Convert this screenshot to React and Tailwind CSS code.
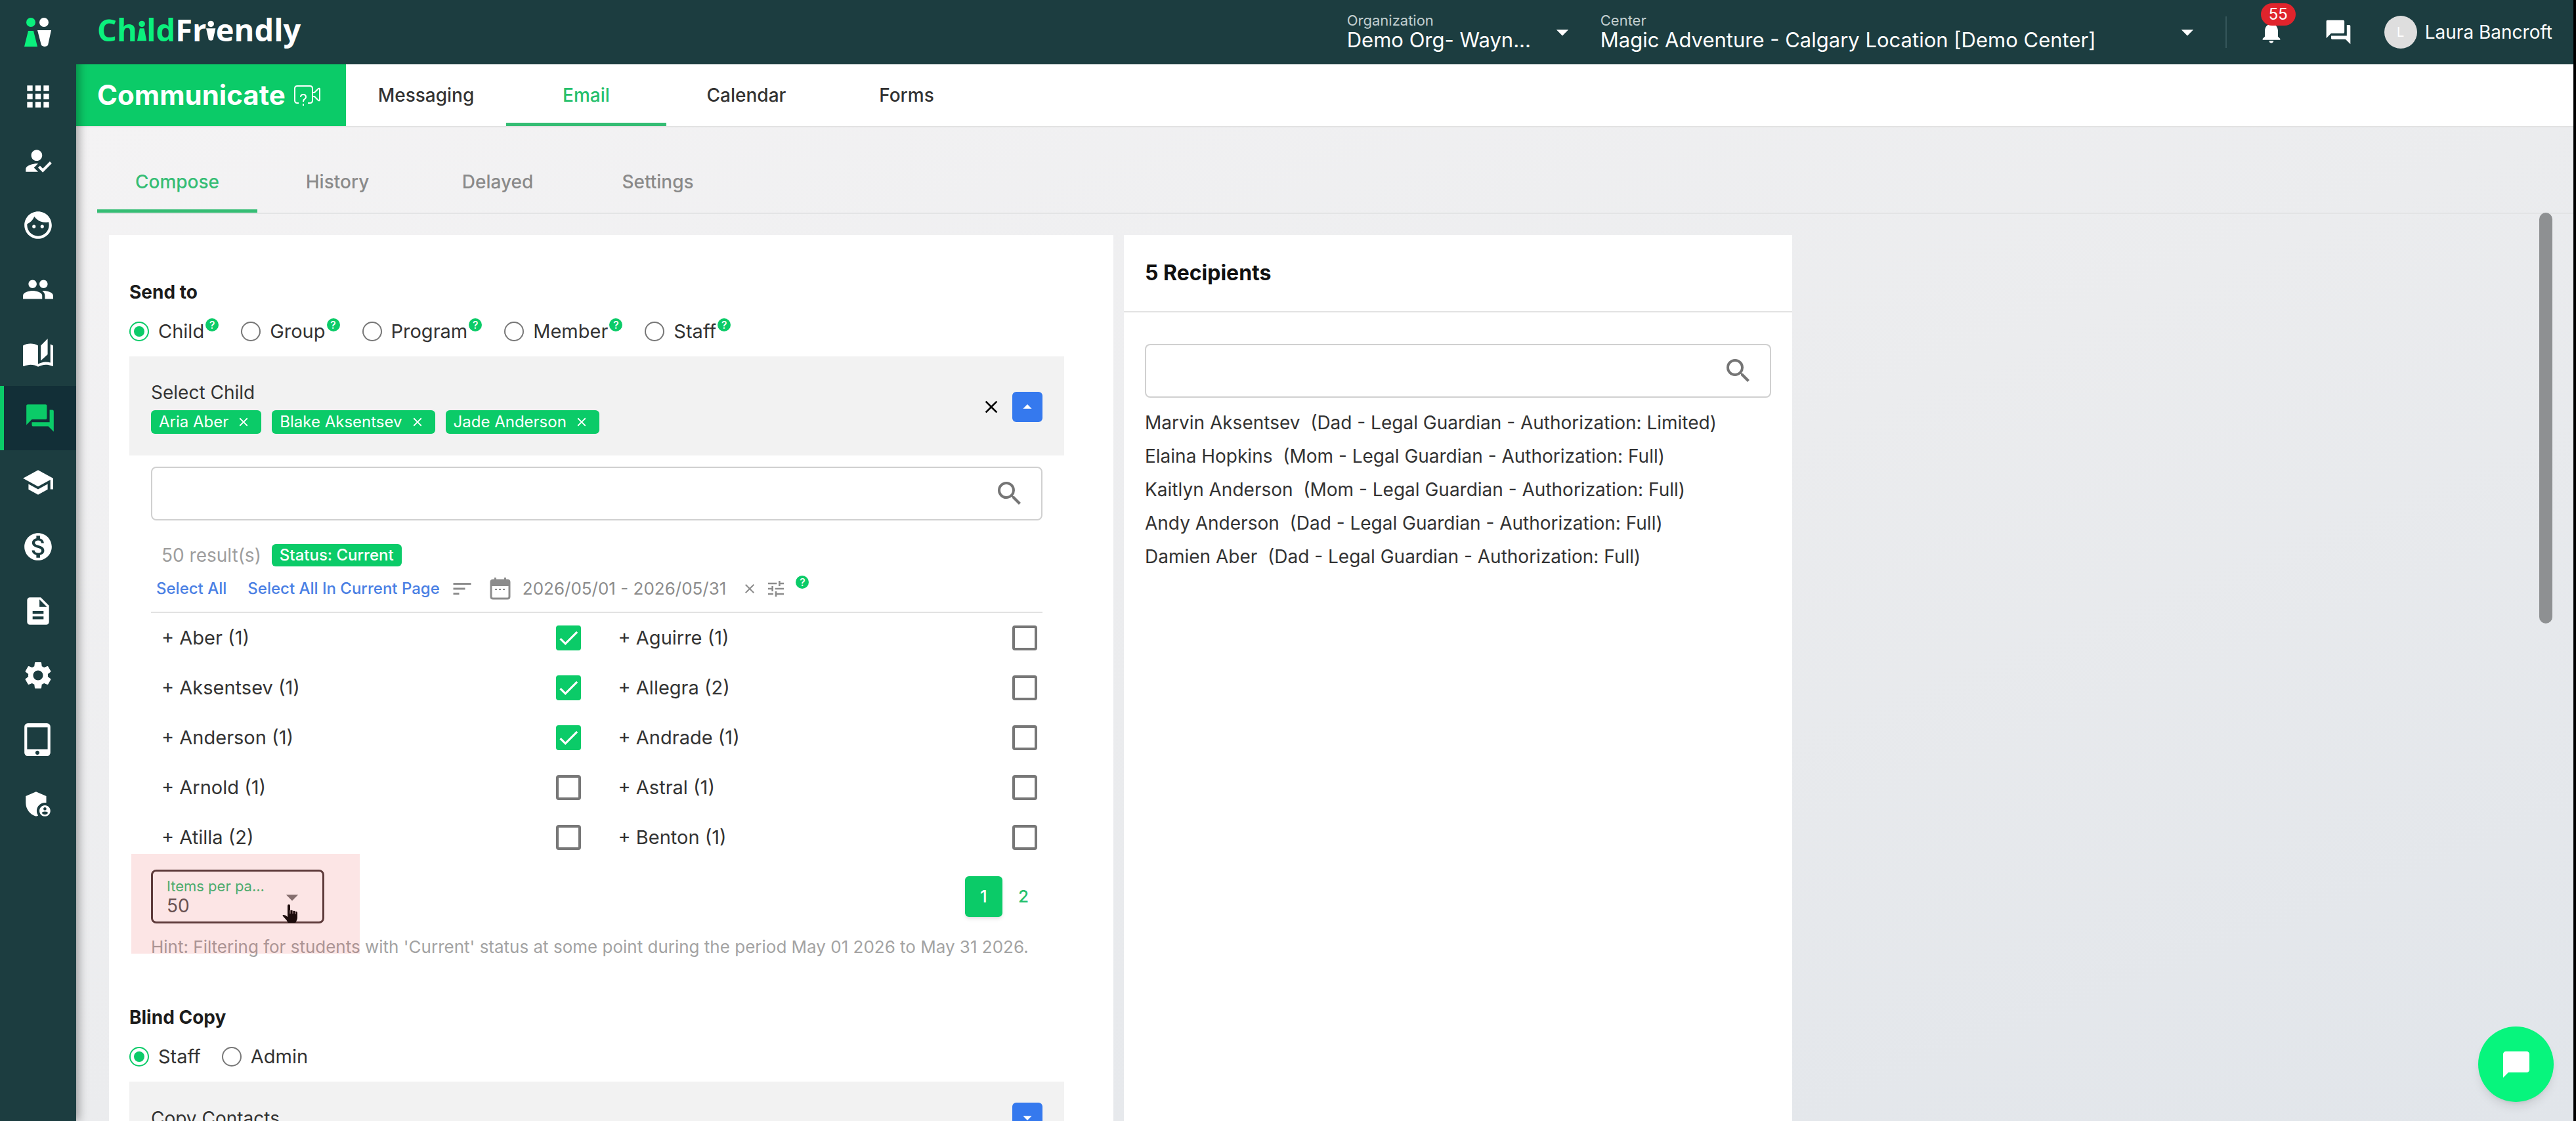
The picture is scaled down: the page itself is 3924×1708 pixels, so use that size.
import React, { useState } from 'react';
import {
  MdApps,
  MdHowToReg,
  MdFace,
  MdPeople,
  MdAutoStories,
  MdForum,
  MdSchool,
  MdMonetizationOn,
  MdDescription,
  MdSettings,
  MdTabletMac,
  MdAdminPanelSettings,
  MdNotifications,
  MdArrowDropDown,
  MdArrowDropUp,
  MdSearch,
  MdClose,
  MdCheck,
  MdSort,
  MdTune,
  MdChatBubble,
} from 'react-icons/md';

const navItems = [
  { name: 'Dashboard', icon: MdApps },
  { name: 'Attendance', icon: MdHowToReg },
  { name: 'Children', icon: MdFace },
  { name: 'Members', icon: MdPeople },
  { name: 'Learning', icon: MdAutoStories },
  { name: 'Communicate', icon: MdForum },
  { name: 'Programs', icon: MdSchool },
  { name: 'Billing', icon: MdMonetizationOn },
  { name: 'Reports', icon: MdDescription },
  { name: 'Settings', icon: MdSettings },
  { name: 'Devices', icon: MdTabletMac },
  { name: 'Admin', icon: MdAdminPanelSettings },
];

const families = [
  'Aber (1)', 'Aguirre (1)',
  'Aksentsev (1)', 'Allegra (2)',
  'Anderson (1)', 'Andrade (1)',
  'Arnold (1)', 'Astral (1)',
  'Atilla (2)', 'Benton (1)',
];

const recipients = [
  ['Marvin Aksentsev', '(Dad - Legal Guardian - Authorization: Limited)'],
  ['Elaina Hopkins', '(Mom - Legal Guardian - Authorization: Full)'],
  ['Kaitlyn Anderson', '(Mom - Legal Guardian - Authorization: Full)'],
  ['Andy Anderson', '(Dad - Legal Guardian - Authorization: Full)'],
  ['Damien Aber', '(Dad - Legal Guardian - Authorization: Full)'],
];

const LogoMark = () => (
  <svg width="42" height="46" viewBox="0 0 42 46" aria-hidden="true">
    <circle cx="10" cy="8" r="7" fill="#0bf07d" />
    <path d="M6 21h8l6 24H0z" fill="#0bf07d" />
    <circle cx="30" cy="8" r="7" fill="#fff" />
    <path d="M20 20h21l-5 23q-5 4-10 0z" fill="#fff" />
  </svg>
);

// the two "i" letters of the word mark are little figures
const FigureI = ({ body }) => (
  <span className="relative inline-block">
    <span className="text-transparent">i</span>
    <svg className="absolute inset-x-0 bottom-3 h-8 w-full" viewBox="0 0 15 32" aria-hidden="true">
      <circle cx="7.5" cy="5" r="5" fill="currentColor" />
      <path d={body} fill="currentColor" />
    </svg>
  </span>
);

const VideoHelpIcon = () => (
  <svg width="42" height="34" viewBox="0 0 42 34" fill="none" stroke="#fff" strokeWidth="2" aria-hidden="true">
    <path d="M8 29H6q-4 0-4-4V7q0-4 4-4h19q4 0 4 4v18q0 4-4 4h-3" />
    <path d="M29 13l3 0 6-6q2-1 2 1v16q0 2-2 1l-6-6h-3" />
    <path d="M11 20q0-4 4-4t4 4q0 2-2 3t-2 4M15 30v3" />
  </svg>
);

const CalendarIcon = () => (
  <svg width="32" height="34" viewBox="0 0 32 34" aria-hidden="true">
    <path d="M5 4h22q3 0 3 3v22q0 3-3 3H5q-3 0-3-3V7q0-3 3-3z" fill="none" stroke="#8c8c8c" strokeWidth="3" />
    <path d="M2 5h28v8H2zM7 0h3v6H7zM22 0h3v6h-3z" fill="#8c8c8c" />
    <path d="M8 18h3M14 18h3M20 18h3" stroke="#8c8c8c" strokeWidth="2" />
  </svg>
);

// pointing hand drawn over the select
const HandCursor = () => (
  <svg className="pointer-events-none absolute top-[50px] left-[197px]" width="24" height="29" viewBox="0 0 24 29" aria-hidden="true">
    <path
      d="M8 2q0-2 2-2t2 2v7q3-1 4 1 3-1 4 1 3-1 3 2v7q0 3-3 8H9Q7 24 2 19q-3-3 0-3 3 0 6 3z"
      fill="#1c0c0c"
    />
    <path d="M12 9v5M16 10v4M20 11v4" stroke="#c9a9a9" strokeWidth="1" />
  </svg>
);

const HelpBadge = () => (
  <span className="ml-0.5 flex size-5 items-center justify-center self-start rounded-full bg-[#0bcb68] text-base leading-5 font-medium text-white">
    ?
  </span>
);

const Radio = ({ name, label, help, defaultChecked }) => (
  <div className="flex h-10 items-center">
    <label className="flex items-center gap-[14px] text-[29px]">
      <input
        type="radio"
        name={name}
        defaultChecked={defaultChecked}
        className="size-[30px] appearance-none rounded-full border-2 border-[#777] bg-white bg-clip-content p-[5px] checked:border-[#0bcb68] checked:bg-[#0bcb68]"
      />
      {label}
    </label>
    {help && <HelpBadge />}
  </div>
);

const SearchBox = ({ label }) => (
  <div className="flex h-[82px] items-center rounded-lg border-2 border-[#d0d0d0] bg-white pr-6">
    <input type="text" aria-label={label} className="h-full min-w-0 flex-1 px-6 outline-none" />
    <MdSearch className="size-12 text-[#757575]" />
  </div>
);

const Chip = ({ name }) => (
  <span className="flex h-9 items-center gap-3 rounded-md bg-[#0bcb68] pr-4 pl-3 text-2xl text-white">
    {name}
    <button type="button" aria-label={`Remove ${name}`}>
      <MdClose className="size-[22px]" />
    </button>
  </span>
);

const HeaderSelect = ({ id, label, value, className }) => (
  <div className={`relative flex flex-col ${className}`}>
    <label htmlFor={id} className="text-[22px] leading-6 text-[#c3cfd0]">{label}</label>
    <select id={id} className="appearance-none bg-transparent text-[31px] leading-9 text-white outline-none">
      <option>{value}</option>
    </select>
    <MdArrowDropDown className="pointer-events-none absolute top-2 right-0 size-11 text-white" />
  </div>
);

const App = () => {
  const [checked, setChecked] = useState(['Aber (1)', 'Aksentsev (1)', 'Anderson (1)']);

  const toggle = (family) => {
    setChecked((prev) => (prev.includes(family) ? prev.filter((f) => f !== family) : [...prev, family]));
  };

  return (
    <div className="flex h-screen overflow-hidden border-r-4 border-black bg-[#1c3d40] font-['Inter',sans-serif] text-[28px] leading-10 text-[#333]">
      {/* Sidebar */}
      <aside className="z-10 w-[116px] shrink-0 bg-[#1c3d40] shadow-[4px_0_14px_rgba(0,0,0,0.35)]">
        <a href="#home" aria-label="Home" className="flex h-[98px] items-center justify-center">
          <LogoMark />
        </a>
        <nav>
          {navItems.map(({ name, icon: Icon }) => (
            <a
              key={name}
              href={`#${name.toLowerCase()}`}
              aria-label={name}
              className={
                name === 'Communicate'
                  ? 'flex h-[98px] items-center justify-center border-l-[6px] border-[#0bcb68] bg-[#122f37] text-[#0bcb68]'
                  : 'flex h-[98px] items-center justify-center text-white'
              }
            >
              <Icon className="size-[50px]" />
            </a>
          ))}
        </nav>
      </aside>

      <div className="flex min-w-0 flex-1 flex-col">
        {/* Top bar */}
        <header className="z-10 flex h-[98px] shrink-0 items-center justify-between bg-[#1c3d40] pr-8 pl-8">
          <div className="pb-2 font-['Open_Sans',sans-serif] text-[47px] leading-[60px] font-bold text-white">
            <span className="text-[#0bf07d]">
              Ch<FigureI body="M4 12h7l4 20H0z" />ld
            </span>
            Fr<FigureI body="M0 12h15l-4 18q-3 3-7 0z" />endly
          </div>
          <div className="flex items-center">
            <HeaderSelect id="organization" label="Organization" value="Demo Org- Wayn..." className="w-[350px]" />
            <HeaderSelect id="center" label="Center" value="Magic Adventure - Calgary Location [Demo Center]" className="ml-9 w-[916px]" />
            <div className="ml-9 h-12 w-[2px] bg-[#35565a]" />
            <button type="button" aria-label="Notifications" className="relative ml-12 text-white">
              <MdNotifications className="size-10" />
              <span className="absolute -top-6 left-1 rounded-full bg-[#e0242c] px-3 text-2xl leading-[34px]">55</span>
            </button>
            <button type="button" aria-label="Messages" className="ml-[60px] text-white">
              <MdForum className="size-11" />
            </button>
            <span className="ml-12 flex size-[50px] items-center justify-center rounded-full bg-[#dedede] text-xl text-white">L</span>
            <span className="ml-3 text-[28px] text-white">Laura Bancroft</span>
          </div>
        </header>

        {/* Section tabs */}
        <div className="flex h-24 shrink-0 border-b-2 border-[#e2e2e2] bg-white font-medium">
          <h1 className="flex w-[411px] items-center gap-3 bg-[#0bcb68] pl-8 text-[42px] font-bold text-white">
            Communicate
            <VideoHelpIcon />
          </h1>
          {['Messaging', 'Email', 'Calendar', 'Forms'].map((tab) => (
            <a
              key={tab}
              href={`#${tab.toLowerCase()}`}
              className={
                tab === 'Email'
                  ? 'flex w-[244px] items-center justify-center border-y-[5px] border-t-transparent border-b-[#35bd74] text-[#24c06c]'
                  : 'flex w-[244px] items-center justify-center'
              }
            >
              {tab}
            </a>
          ))}
        </div>

        <main className="relative flex min-h-0 flex-1 flex-col bg-linear-to-br from-[#f4f3f4] via-[#ebecee] via-50% to-[#e1e5ea] pl-8">
          <div className="flex h-[132px] shrink-0 border-b-2 border-[#e3e4e5] font-medium text-[#8a8a8a]">
            {['Compose', 'History', 'Delayed', 'Settings'].map((tab) => (
              <a
                key={tab}
                href={`#${tab.toLowerCase()}`}
                className={
                  tab === 'Compose'
                    ? 'flex w-[244px] items-center justify-center border-b-[5px] border-[#35bd74] pt-10 text-[#35bd74]'
                    : 'flex w-[244px] items-center justify-center pt-9'
                }
              >
                {tab}
              </a>
            ))}
          </div>

          <div className="flex flex-1 gap-4 pt-8 pl-[18px]">
            <form className="w-[1530px] shrink-0 bg-white pt-[67px] pr-[75px] pl-[31px]">
              <h2 className="font-bold text-[#1c1c1c]">Send to</h2>
              <div className="mt-5 flex gap-[34px]">
                <Radio name="sendTo" label="Child" help defaultChecked />
                <Radio name="sendTo" label="Group" help />
                <Radio name="sendTo" label="Program" help />
                <Radio name="sendTo" label="Member" help />
                <Radio name="sendTo" label="Staff" help />
              </div>

              <div className="mt-[18px] flex items-center justify-between bg-[#f2f2f2] px-[33px] pt-[35px] pb-[33px]">
                <div>
                  <div>Select Child</div>
                  <div className="mt-[7px] flex gap-4">
                    <Chip name="Aria Aber" />
                    <Chip name="Blake Aksentsev" />
                    <Chip name="Jade Anderson" />
                  </div>
                </div>
                <div className="flex items-center gap-4">
                  <button type="button" aria-label="Clear selection">
                    <MdClose className="size-8 text-black" />
                  </button>
                  <button type="button" aria-label="Collapse" className="flex size-[46px] items-center justify-center rounded-md bg-[#3579ee] text-white">
                    <MdArrowDropUp className="size-8" />
                  </button>
                </div>
              </div>

              <div className="mt-[17px] px-[33px]">
                <SearchBox label="Search children" />

                <div className="mt-[33px] flex items-center gap-4 pl-4 text-[#9e9e9e]">
                  50 result(s)
                  <span className="rounded-md bg-[#0bcb68] px-3 text-2xl leading-[34px] font-medium text-white">Status: Current</span>
                </div>

                <div className="mt-[11px] flex items-center border-b-2 border-[#e2e2e2] pb-[15px] pl-2 text-[#8c8c8c]">
                  <button type="button" className="text-2xl font-medium text-[#4a80e4]">Select All</button>
                  <button type="button" className="ml-8 text-2xl font-medium text-[#4a80e4]">Select All In Current Page</button>
                  <button type="button" aria-label="Sort" className="ml-4">
                    <MdSort className="size-9" />
                  </button>
                  <span className="ml-6 flex items-center gap-[18px] text-[26px]">
                    <CalendarIcon />
                    2026/05/01 - 2026/05/31
                  </span>
                  <button type="button" aria-label="Clear dates" className="ml-6">
                    <MdClose className="size-6" />
                  </button>
                  <button type="button" aria-label="Filters" className="mx-3">
                    <MdTune className="size-8" />
                  </button>
                  <HelpBadge />
                </div>
              </div>

              <div className="grid grid-cols-2 pl-[33px] text-[29px]">
                {families.map((family) => (
                  <div key={family} className="flex h-[76px] items-center justify-between pr-[41px] pl-4">
                    <label htmlFor={family}>+ {family}</label>
                    <span className="relative flex">
                      <input
                        id={family}
                        type="checkbox"
                        checked={checked.includes(family)}
                        onChange={() => toggle(family)}
                        className="size-[38px] appearance-none rounded-sm border-4 border-[#777] checked:border-[#0bcb68] checked:bg-[#0bcb68]"
                      />
                      {checked.includes(family) && (
                        <MdCheck className="pointer-events-none absolute inset-0 size-[38px] text-white" />
                      )}
                    </span>
                  </div>
                ))}
              </div>

              <div className="mt-[11px] flex items-center justify-between pr-[30px] pl-[33px]">
                <div className="relative h-[82px] w-[264px] rounded-lg border-[3px] border-[#4a3c3c] pt-2 pl-[21px]">
                  <label htmlFor="perPage" className="block text-[22px] leading-7 text-[#35bd74]">Items per pa...</label>
                  <select id="perPage" className="block w-full appearance-none text-[28px] leading-8 text-[#555] outline-none">
                    <option>50</option>
                  </select>
                  <MdArrowDropDown className="pointer-events-none absolute top-[17px] right-6 size-11 text-[#777]" />
                  <div className="pointer-events-none absolute -top-[27px] -left-[33px] h-[152px] w-[348px] bg-[#e53935]/13" />
                  <HandCursor />
                </div>
                <div className="flex items-center text-[26px] font-medium">
                  <button type="button" className="h-[62px] w-[57px] rounded-md bg-[#0bcb68] text-white shadow-md">1</button>
                  <button type="button" className="h-[62px] w-16 text-[#24c06c]">2</button>
                </div>
              </div>
              <p className="mt-4 pl-[33px] text-[26px] whitespace-nowrap text-[#a3a3a3]">
                Hint: Filtering for students with 'Current' status at some point during the period May 01 2026 to May 31 2026.
              </p>

              <h2 className="mt-[67px] font-bold text-[#1c1c1c]">Blind Copy</h2>
              <div className="mt-5 flex gap-8">
                <Radio name="blindCopy" label="Staff" defaultChecked />
                <Radio name="blindCopy" label="Admin" />
              </div>
              <div className="mt-[18px] flex items-start justify-between bg-[#f2f2f2] px-[33px] py-8">
                <span className="pt-1">Copy Contacts</span>
                <button type="button" aria-label="Expand" className="flex size-[46px] items-center justify-center rounded-md bg-[#3579ee] text-white">
                  <MdArrowDropDown className="size-8" />
                </button>
              </div>
            </form>

            <section className="w-[1018px] shrink-0 bg-white">
              <h2 className="border-b-2 border-[#e2e2e2] px-8 py-[38px] text-[32px] font-bold text-[#111]">5 Recipients</h2>
              <div className="px-8 pt-12">
                <SearchBox label="Search recipients" />
                <ul className="mt-[13px]">
                  {recipients.map(([name, role]) => (
                    <li key={name} className="leading-[51px] whitespace-pre">{name}  {role}</li>
                  ))}
                </ul>
              </div>
            </section>
          </div>

          <div className="absolute top-[130px] right-8 h-[626px] w-5 rounded-full bg-[#8e9092]" />
          <button
            type="button"
            aria-label="Open chat"
            className="absolute right-[30px] bottom-[29px] flex size-[115px] items-center justify-center rounded-full bg-[#07f57d] text-white shadow-lg"
          >
            <MdChatBubble className="size-12" />
          </button>
        </main>
      </div>
    </div>
  );
};

export default App;
